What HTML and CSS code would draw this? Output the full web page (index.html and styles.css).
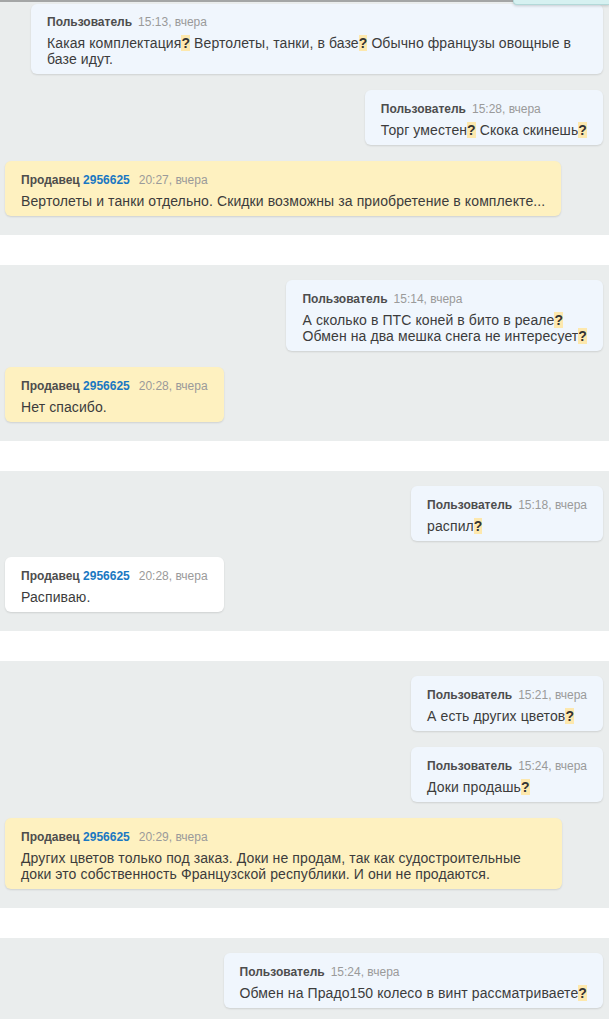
FILE: index.html
```html
<!DOCTYPE html>
<html lang="ru">
<head>
<meta charset="utf-8">
<link rel="stylesheet" href="styles.css">
</head>
<body>
<div class="topline"></div>
<div class="popup"></div>
<div class="thread">
  <section class="group first">
    <div class="msg user wide">
      <div class="head"><b class="name">Пользователь</b><span class="time">15:13, вчера</span></div>
      <div class="text">Какая комплектация<b class="q">?</b> Вертолеты, танки, в базе<b class="q">?</b> Обычно французы овощные в<br>базе идут.</div>
    </div>
    <div class="msg user">
      <div class="head"><b class="name">Пользователь</b><span class="time">15:28, вчера</span></div>
      <div class="text">Торг уместен<b class="q">?</b> Скока скинешь<b class="q">?</b></div>
    </div>
    <div class="msg seller">
      <div class="head"><b class="name">Продавец <span class="id">2956625</span></b><span class="time">20:27, вчера</span></div>
      <div class="text">Вертолеты и танки отдельно. Скидки возможны за приобретение в комплекте...</div>
    </div>
  </section>
  <section class="group">
    <div class="msg user">
      <div class="head"><b class="name">Пользователь</b><span class="time">15:14, вчера</span></div>
      <div class="text">А сколько в ПТС коней в бито в реале<b class="q">?</b><br>Обмен на два мешка снега не интересует<b class="q">?</b></div>
    </div>
    <div class="msg seller">
      <div class="head"><b class="name">Продавец <span class="id">2956625</span></b><span class="time">20:28, вчера</span></div>
      <div class="text">Нет спасибо.</div>
    </div>
  </section>
  <section class="group">
    <div class="msg user">
      <div class="head"><b class="name">Пользователь</b><span class="time">15:18, вчера</span></div>
      <div class="text">распил<b class="q">?</b></div>
    </div>
    <div class="msg seller plain">
      <div class="head"><b class="name">Продавец <span class="id">2956625</span></b><span class="time">20:28, вчера</span></div>
      <div class="text">Распиваю.</div>
    </div>
  </section>
  <section class="group">
    <div class="msg user">
      <div class="head"><b class="name">Пользователь</b><span class="time">15:21, вчера</span></div>
      <div class="text">А есть других цветов<b class="q">?</b></div>
    </div>
    <div class="msg user">
      <div class="head"><b class="name">Пользователь</b><span class="time">15:24, вчера</span></div>
      <div class="text">Доки продашь<b class="q">?</b></div>
    </div>
    <div class="msg seller">
      <div class="head"><b class="name">Продавец <span class="id">2956625</span></b><span class="time">20:29, вчера</span></div>
      <div class="text">Других цветов только под заказ. Доки не продам, так как судостроительные доки это собственность Французской республики. И они не продаются.</div>
    </div>
  </section>
  <section class="group">
    <div class="msg user">
      <div class="head"><b class="name">Пользователь</b><span class="time">15:24, вчера</span></div>
      <div class="text">Обмен на Прадо150 колесо в винт рассматриваете<b class="q">?</b></div>
    </div>
  </section>
</div>
</body>
</html>
```
FILE: styles.css
```css
html, body {
  margin: 0;
  padding: 0;
}
body {
  background: #ffffff;
  font-family: "Liberation Sans", Arial, sans-serif;
  color: #3c3c3c;
  overflow: hidden;
}
.topline {
  height: 2px;
  background: #a4a6a6;
}
.popup {
  position: absolute;
  top: 0;
  right: 0;
  width: 95px;
  height: 4px;
  background: #d6f1f1;
  border: 1px solid #b3d9d9;
  border-top: none;
  border-right: none;
  border-bottom-left-radius: 4px;
  box-shadow: 0 1px 3px rgba(0, 0, 0, 0.18);
}
.thread {
  display: flex;
  flex-direction: column;
  gap: 30px;
}
.group {
  background: #eaeded;
  display: flex;
  flex-direction: column;
  gap: 16px;
  padding: 15px 6px 19px;
}
.group.first {
  padding-top: 2px;
}
.msg {
  box-sizing: border-box;
  padding: 11px 16px 7px;
  border-radius: 6px;
  box-shadow: 0 1px 2px rgba(0, 0, 0, 0.12);
  width: fit-content;
}
.msg.user {
  align-self: flex-end;
  background: #f0f6fd;
  max-width: 572px;
}
.msg.user.wide {
  width: 572px;
  padding-top: 10px;
}
.msg.seller {
  align-self: flex-start;
  background: #fef1c0;
  max-width: 557px;
  margin-left: -1px;
}
.msg.seller.plain {
  background: #ffffff;
}
.head {
  font-size: 12px;
  line-height: 16px;
  margin-bottom: 5px;
  white-space: nowrap;
}
.name {
  color: #4d4d4d;
  font-weight: bold;
}
.id {
  color: #1a78c2;
}
.time {
  color: #9a9a9a;
  margin-left: 6px;
}
.seller .time {
  margin-left: 9px;
}
.text {
  font-size: 14px;
  line-height: 16px;
  letter-spacing: 0.1px;
}
.q {
  background: #fde8ad;
  color: #333333;
  font-weight: bold;
}
```
